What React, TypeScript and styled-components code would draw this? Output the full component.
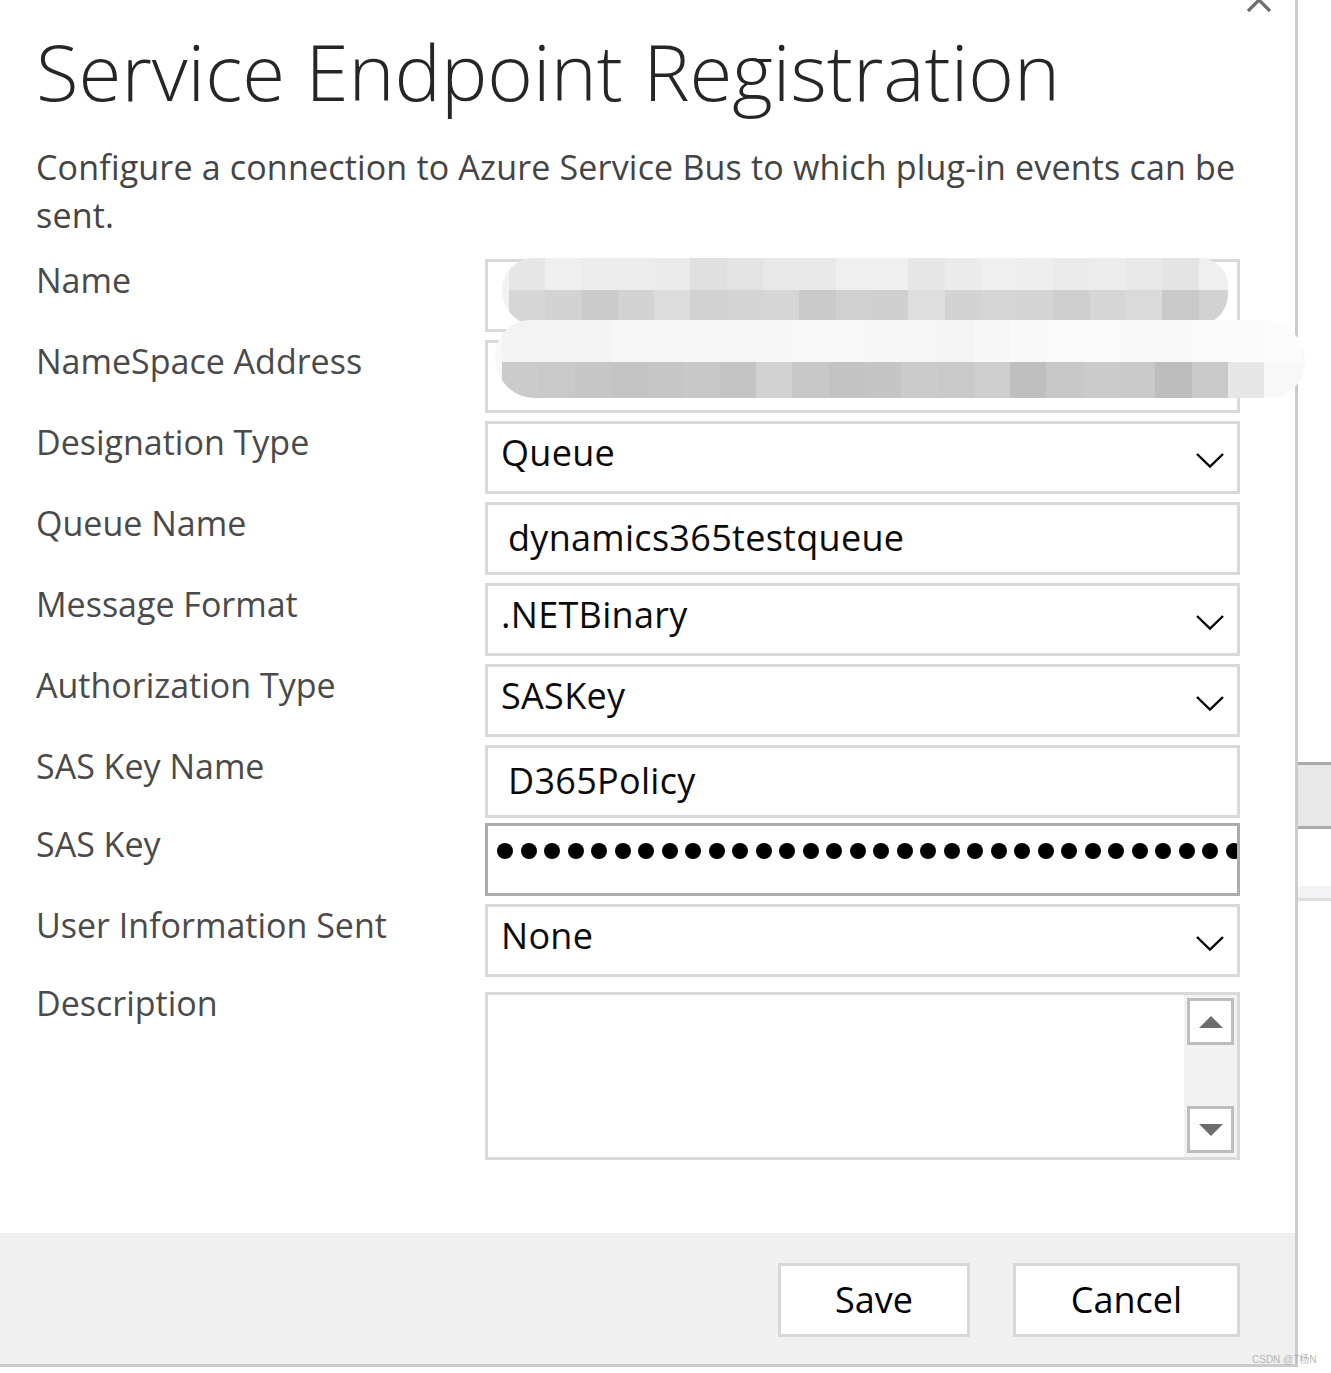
import React from "react";
import styled, { createGlobalStyle } from "styled-components";

const GlobalStyle = createGlobalStyle`
  body {
    margin: 0;
    background: #fff;
    font-family: "Open Sans", "Noto Sans", sans-serif;
  }
`;

const Page = styled.div`
  position: relative;
  width: 1331px;
  height: 1373px;
  display: flex;
  align-items: flex-start;
  overflow: hidden;
  background: #fff;
`;

const Dialog = styled.div`
  position: relative;
  box-sizing: border-box;
  width: 1298px;
  height: 1367px;
  flex: none;
  display: flex;
  flex-direction: column;
  border-right: 3px solid #cbcbcb;
  border-bottom: 3px solid #cbcbcb;
`;

const CloseButton = styled.svg`
  position: absolute;
  left: 1246px;
  top: -13px;
`;

const Header = styled.header`
  padding: 21px 0 0 36px;
`;

const Title = styled.h1`
  margin: 0;
  font-weight: 300;
  font-size: 78px;
  line-height: 100px;
  color: #262626;
  white-space: nowrap;
`;

const Subtitle = styled.p`
  margin: 22px 0 0;
  max-width: 1250px;
  font-size: 34px;
  line-height: 48px;
  letter-spacing: 0.18px;
  color: #444;
`;

const Form = styled.div`
  display: grid;
  grid-template-columns: 449px 755px;
  grid-template-rows: repeat(6, 73px) 70px 73px 80px 168px;
  row-gap: 8px;
  margin-top: 20px;
  padding-left: 36px;
`;

const Label = styled.div<{ $shift?: number }>`
  font-size: 34px;
  line-height: 46px;
  color: #4a4a4a;
  margin-top: ${(p) => p.$shift ?? -2}px;
  white-space: nowrap;
`;

type FieldKind = "select" | "text" | "secret" | "area" | "masked";

const Field = styled.div<{ $kind: FieldKind }>`
  position: relative;
  box-sizing: border-box;
  height: ${(p) => (p.$kind === "area" ? "168px" : "73px")};
  display: flex;
  align-items: ${(p) => (p.$kind === "secret" || p.$kind === "area" ? "flex-start" : "center")};
  border: 3px solid ${(p) => (p.$kind === "secret" ? "#acacb0" : "#d9d9d9")};
  background: #fff;
  padding-left: ${(p) => (p.$kind === "select" ? "13px" : p.$kind === "text" ? "20px" : "0")};
  padding-bottom: ${(p) => (p.$kind === "select" ? "10px" : p.$kind === "text" ? "3px" : "0")};
  overflow: ${(p) => (p.$kind === "secret" ? "hidden" : "visible")};
`;

const Value = styled.span`
  font-size: 36px;
  line-height: 49px;
  letter-spacing: 0.3px;
  color: #0a0a0a;
  white-space: nowrap;
`;

const Chevron = styled.svg`
  margin-left: auto;
  margin-right: 12px;
  margin-top: 16px;
  flex: none;
`;

const Dots = styled.div`
  display: flex;
  gap: 7.5px;
  padding: 17px 0 0 9px;
`;

const Dot = styled.span`
  flex: none;
  width: 16px;
  height: 16px;
  border-radius: 50%;
  background: #000;
`;

const ScrollTrack = styled.div`
  margin-left: auto;
  box-sizing: border-box;
  width: 53px;
  height: 100%;
  display: flex;
  flex-direction: column;
  justify-content: space-between;
  padding: 3px 3px 4px;
  background: #f2f2f2;
`;

const ScrollButton = styled.div`
  box-sizing: border-box;
  width: 47px;
  height: 47px;
  display: flex;
  align-items: center;
  justify-content: center;
  border: 3px solid #bdbdbd;
  background: #fff;
`;

const Blob = styled.div<{ $left: number; $top: number; $width: number; $radius: string; $bg: string }>`
  position: absolute;
  left: ${(p) => p.$left}px;
  top: ${(p) => p.$top}px;
  width: ${(p) => p.$width}px;
  border-radius: ${(p) => p.$radius};
  background: ${(p) => p.$bg};
  overflow: hidden;
  padding-left: 7px;
  box-sizing: border-box;
`;

const MosaicRow = styled.div<{ $height: number }>`
  display: flex;
  height: ${(p) => p.$height}px;
`;

const Cell = styled.span<{ $c: string }>`
  flex: none;
  width: 36.3px;
  height: 100%;
  background: ${(p) => p.$c};
`;

const Footer = styled.footer`
  margin-top: auto;
  height: 131px;
  box-sizing: border-box;
  display: flex;
  justify-content: flex-end;
  align-items: flex-start;
  gap: 43px;
  padding: 30px 55px 0 0;
  background: #f0f0f0;
`;

const Button = styled.button<{ $width: number }>`
  box-sizing: border-box;
  width: ${(p) => p.$width}px;
  height: 74px;
  border: 3px solid #d7d7d7;
  background: #fff;
  font-family: "Open Sans", "Noto Sans", sans-serif;
  font-size: 36px;
  color: #000;
  padding: 0 0 2px;
  cursor: pointer;
`;

const SideStrip = styled.div`
  flex: 1;
  display: flex;
  flex-direction: column;
  padding-top: 762px;
`;

const SideThumb = styled.div`
  height: 61px;
  border-top: 3px solid #aaa;
  border-bottom: 3px solid #aaa;
  background: #e8e8e8;
`;

const SideBand = styled.div`
  margin-top: 57px;
  height: 12px;
  background: #f3f3f5;
  border-bottom: 3px solid #dedede;
`;

const Watermark = styled.span`
  position: absolute;
  left: 1252px;
  top: 1351px;
  font-family: "Liberation Sans", "Noto Sans CJK SC", sans-serif;
  font-size: 10px;
  color: #b4b4b4;
  white-space: nowrap;
`;

const nameTop = ["#e6e6e6", "#efefef", "#ececec", "#ececec", "#ebebeb", "#e0e0e0", "#e3e3e3", "#e8e8e8", "#e9e9e9", "#efefef", "#efefef", "#e6e6e6", "#ebebeb", "#efefef", "#eeeeee", "#ebebeb", "#ececec", "#e8e8e8", "#e4e4e4", "#efefef", "#efefef"];
const nameBottom = ["#d6d6d6", "#d3d3d3", "#cbcbcb", "#d3d3d3", "#dcdcdc", "#d2d2d2", "#d4d4d4", "#d6d6d6", "#c9c9c9", "#d0d0d0", "#cfcfcf", "#dedede", "#d3d3d3", "#d6d6d6", "#d4d4d4", "#cfcfcf", "#d6d6d6", "#dadada", "#c9c9c9", "#d2d2d2", "#d2d2d2"];
const nsTop = ["#f3f3f3", "#f4f4f4", "#f3f3f3", "#f6f6f6", "#f7f7f7", "#f7f7f7", "#f6f6f6", "#f7f7f7", "#f8f8f8", "#f8f8f8", "#f7f7f7", "#f6f6f6", "#f5f5f5", "#f7f7f7", "#f9f9f9", "#fafafa", "#fafafa", "#f9f9f9", "#f8f8f8", "#fafafa", "#fbfbfb", "#fcfcfc"];
const nsBottom = ["#cbcbcb", "#c9c9c9", "#c6c6c6", "#c4c4c4", "#c6c6c6", "#c8c8c8", "#c4c4c4", "#d2d2d2", "#c8c8c8", "#c3c3c3", "#c5c5c5", "#cbcbcb", "#c9c9c9", "#cecece", "#bfbfbf", "#c8c8c8", "#cbcbcb", "#c9c9c9", "#bdbdbd", "#c9c9c9", "#e6e6e6", "#f8f8f8"];

const Mosaic: React.FC<{ top: string[]; bottom: string[]; topH: number; bottomH: number }> = ({ top, bottom, topH, bottomH }) => (
  <>
    <MosaicRow $height={topH}>
      {top.map((c, i) => (
        <Cell key={i} $c={c} />
      ))}
    </MosaicRow>
    <MosaicRow $height={bottomH}>
      {bottom.map((c, i) => (
        <Cell key={i} $c={c} />
      ))}
    </MosaicRow>
  </>
);

const ChevronDown = () => (
  <Chevron width="30" height="17" viewBox="0 0 30 17">
    <polyline points="2,2 15,14.5 28,2" fill="none" stroke="#000" strokeWidth="2.4" />
  </Chevron>
);

const rows: { label: string; kind: FieldKind; value?: string }[] = [
  { label: "Designation Type", kind: "select", value: "Queue" },
  { label: "Queue Name", kind: "text", value: "dynamics365testqueue" },
  { label: "Message Format", kind: "select", value: ".NETBinary" },
  { label: "Authorization Type", kind: "select", value: "SASKey" },
  { label: "SAS Key Name", kind: "text", value: "D365Policy" },
];

const App: React.FC = () => {
  return (
    <Page>
      <GlobalStyle />
      <Dialog>
        <CloseButton width="26" height="26" viewBox="0 0 26 26">
          <path d="M2 2 L24 24 M24 2 L2 24" stroke="#6e6e6e" strokeWidth="3.2" />
        </CloseButton>
        <Header>
          <Title>Service Endpoint Registration</Title>
          <Subtitle>Configure a connection to Azure Service Bus to which plug-in events can be sent.</Subtitle>
        </Header>

        <Form>
          <Label>Name</Label>
          <Field $kind="masked">
            <Blob $left={14} $top={-4} $width={726} $radius="34px 30px 34px 38px" $bg="#f2f2f2">
              <Mosaic top={nameTop} bottom={nameBottom} topH={32} bottomH={36} />
            </Blob>
          </Field>

          <Label>NameSpace Address</Label>
          <Field $kind="masked">
            <Blob $left={7} $top={-23} $width={810} $radius="40px 46px 40px 44px" $bg="#f8f8f8">
              <Mosaic top={nsTop} bottom={nsBottom} topH={42} bottomH={36} />
            </Blob>
          </Field>

          {rows.map((r) => (
            <React.Fragment key={r.label}>
              <Label>{r.label}</Label>
              <Field $kind={r.kind}>
                <Value>{r.value}</Value>
                {r.kind === "select" && <ChevronDown />}
              </Field>
            </React.Fragment>
          ))}

          <Label>SAS Key</Label>
          <Field $kind="secret">
            <Dots>
              {Array.from({ length: 34 }, (_, i) => (
                <Dot key={i} />
              ))}
            </Dots>
          </Field>

          <Label>User Information Sent</Label>
          <Field $kind="select">
            <Value>None</Value>
            <ChevronDown />
          </Field>

          <Label $shift={-12}>Description</Label>
          <Field $kind="area">
            <ScrollTrack>
              <ScrollButton>
                <svg width="24" height="12" viewBox="0 0 24 12">
                  <polygon points="12,0 24,12 0,12" fill="#6d6d6d" />
                </svg>
              </ScrollButton>
              <ScrollButton>
                <svg width="24" height="12" viewBox="0 0 24 12">
                  <polygon points="0,0 24,0 12,12" fill="#6d6d6d" />
                </svg>
              </ScrollButton>
            </ScrollTrack>
          </Field>
        </Form>

        <Footer>
          <Button $width={192}>Save</Button>
          <Button $width={227}>Cancel</Button>
        </Footer>
      </Dialog>

      <SideStrip>
        <SideThumb />
        <SideBand />
      </SideStrip>

      <Watermark>CSDN @T杨N</Watermark>
    </Page>
  );
};

export default App;
